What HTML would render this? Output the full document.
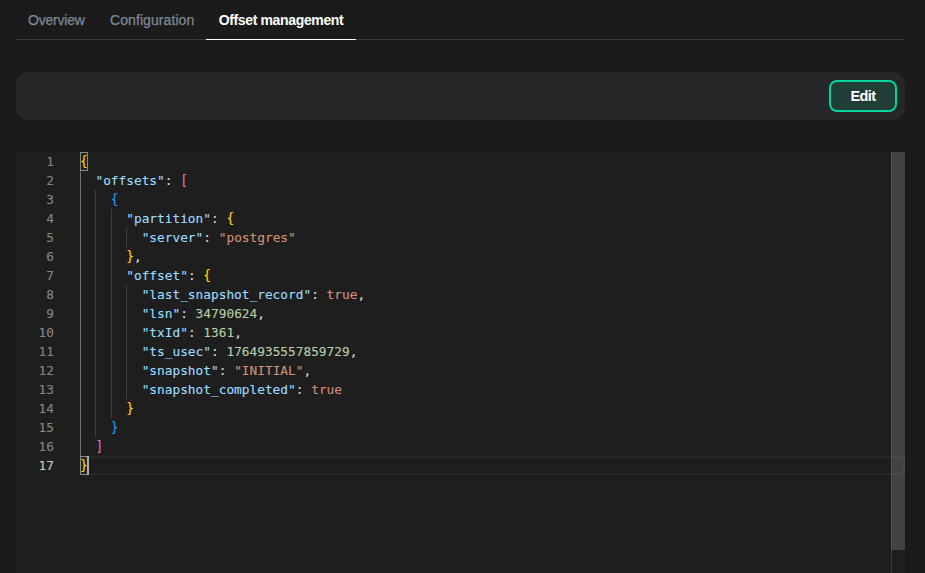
<!DOCTYPE html>
<html lang="en">
<head>
<meta charset="utf-8">
<title>Offset management</title>
<style>
*{box-sizing:border-box;margin:0;padding:0}
html,body{width:925px;height:573px;overflow:hidden;background:#1b1b1b}
body{position:relative;font-family:"Liberation Sans",sans-serif;font-size:14px;color:#fff}
.tabs{position:absolute;left:16px;top:0;width:889px;height:40px;border-bottom:1px solid #333c48}
.tab{position:absolute;top:0;height:40px;line-height:40px;font-size:14px;color:#7d8896;white-space:nowrap;-webkit-text-stroke:0.25px}
.tab.t1{left:12px;letter-spacing:-0.2px}
.tab.t2{left:94px;letter-spacing:0.08px}
.tab.t3{left:190px;width:150px;text-align:center;color:#fff;font-weight:bold;letter-spacing:-0.35px;border-bottom:1px solid #fff;-webkit-text-stroke:0}
.panel{position:absolute;left:16px;top:72px;width:889px;height:48px;border-radius:12px;background:#262729}
.btn{position:absolute;left:829px;top:80px;width:68px;height:32px;border:2px solid #00d4a0;border-radius:8px;background:#203d38;color:#fff;font-weight:bold;font-size:14.5px;line-height:29px;text-align:center;letter-spacing:-0.6px}
.editor{position:absolute;left:16px;top:152px;width:889px;height:421px;background:#1e1e1e;overflow:hidden;font-family:"DejaVu Sans Mono","Liberation Mono",monospace;font-size:12.8px}
.ln{position:absolute;left:0;width:38px;height:19px;line-height:19px;text-align:right;color:#858585;white-space:pre;-webkit-text-stroke:0.12px}
.ln.act{color:#c6c6c6}
.cl{position:absolute;left:64px;height:19px;line-height:19px;white-space:pre;color:#d4d4d4;-webkit-text-stroke:0.12px}
.k{color:#9cdcfe}.s{color:#ce9178}.n{color:#b5cea8}.d{color:#dcdcdc}
.b1,.b2,.b3{display:inline-block;transform:scaleY(1.1);transform-origin:50% 85%}
.b1{color:#ffd700}.b2{color:#da70d6}.b3{color:#179fff}
.g{position:absolute;width:1px;background:#404040}
.g.a{background:#707070}
.curline{position:absolute;left:64px;right:0;top:304px;height:19px;border:2px solid #282828}
.bm{position:absolute;width:8px;height:19px;border:1px solid #888;background:rgba(0,100,0,0.1)}
.cursor{position:absolute;left:71px;top:304px;width:2px;height:19px;background:#aeafad}
.sb{position:absolute;right:0;top:0;width:14px;height:421px;border-left:1px solid #3a3a3a}
.slider{position:absolute;right:0;top:0;width:14px;height:398px;background:rgba(121,121,121,0.4)}
</style>
</head>
<body>
<div class="tabs">
  <div class="tab t1">Overview</div>
  <div class="tab t2">Configuration</div>
  <div class="tab t3">Offset management</div>
</div>
<div class="panel"></div>
<div class="btn">Edit</div>
<div class="editor">
  <div class="curline"></div>
  <div class="g a" style="left:64px;top:19px;height:285px"></div>
  <div class="g" style="left:79px;top:38px;height:247px"></div>
  <div class="g" style="left:95px;top:57px;height:209px"></div>
  <div class="g" style="left:110px;top:76px;height:19px"></div>
  <div class="g" style="left:110px;top:133px;height:114px"></div>
  <div class="bm" style="left:64px;top:0"></div>
  <div class="bm" style="left:64px;top:304px"></div>

  <div class="ln" style="top:0">1</div>
  <div class="ln" style="top:19px">2</div>
  <div class="ln" style="top:38px">3</div>
  <div class="ln" style="top:57px">4</div>
  <div class="ln" style="top:76px">5</div>
  <div class="ln" style="top:95px">6</div>
  <div class="ln" style="top:114px">7</div>
  <div class="ln" style="top:133px">8</div>
  <div class="ln" style="top:152px">9</div>
  <div class="ln" style="top:171px">10</div>
  <div class="ln" style="top:190px">11</div>
  <div class="ln" style="top:209px">12</div>
  <div class="ln" style="top:228px">13</div>
  <div class="ln" style="top:247px">14</div>
  <div class="ln" style="top:266px">15</div>
  <div class="ln" style="top:285px">16</div>
  <div class="ln act" style="top:304px">17</div>

  <div class="cl" style="top:0"><span class="b1">{</span></div>
  <div class="cl" style="top:19px">  <span class="k">"offsets"</span><span class="d">:</span> <span class="b2">[</span></div>
  <div class="cl" style="top:38px">    <span class="b3">{</span></div>
  <div class="cl" style="top:57px">      <span class="k">"partition"</span><span class="d">:</span> <span class="b1">{</span></div>
  <div class="cl" style="top:76px">        <span class="k">"server"</span><span class="d">:</span> <span class="s">"postgres"</span></div>
  <div class="cl" style="top:95px">      <span class="b1">}</span><span class="d">,</span></div>
  <div class="cl" style="top:114px">      <span class="k">"offset"</span><span class="d">:</span> <span class="b1">{</span></div>
  <div class="cl" style="top:133px">        <span class="k">"last_snapshot_record"</span><span class="d">:</span> <span class="s">true</span><span class="d">,</span></div>
  <div class="cl" style="top:152px">        <span class="k">"lsn"</span><span class="d">:</span> <span class="n">34790624</span><span class="d">,</span></div>
  <div class="cl" style="top:171px">        <span class="k">"txId"</span><span class="d">:</span> <span class="n">1361</span><span class="d">,</span></div>
  <div class="cl" style="top:190px">        <span class="k">"ts_usec"</span><span class="d">:</span> <span class="n">1764935557859729</span><span class="d">,</span></div>
  <div class="cl" style="top:209px">        <span class="k">"snapshot"</span><span class="d">:</span> <span class="s">"INITIAL"</span><span class="d">,</span></div>
  <div class="cl" style="top:228px">        <span class="k">"snapshot_completed"</span><span class="d">:</span> <span class="s">true</span></div>
  <div class="cl" style="top:247px">      <span class="b1">}</span></div>
  <div class="cl" style="top:266px">    <span class="b3">}</span></div>
  <div class="cl" style="top:285px">  <span class="b2">]</span></div>
  <div class="cl" style="top:304px"><span class="b1">}</span></div>

  <div class="cursor"></div>
  <div class="sb"></div>
  <div class="slider"></div>
</div>
</body>
</html>
